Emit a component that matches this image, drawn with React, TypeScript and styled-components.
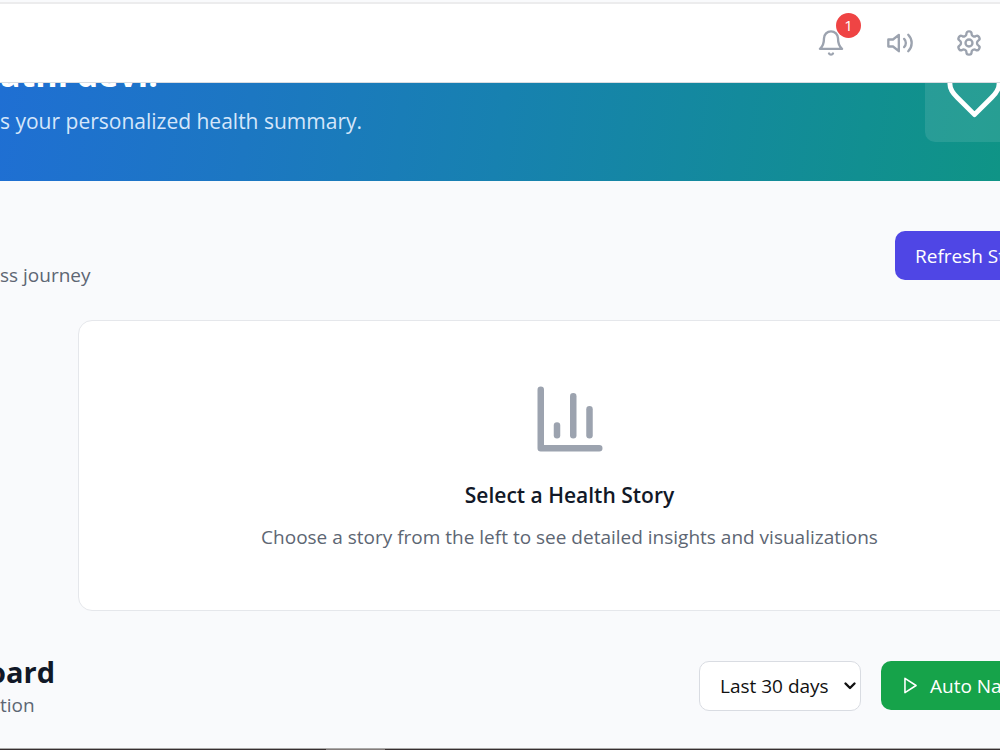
import React from "react";
import styled, { createGlobalStyle } from "styled-components";

const GlobalStyle = createGlobalStyle`
  *, *::before, *::after { box-sizing: border-box; }
  body {
    margin: 0;
    background: #f9fafc;
    color: #111827;
    font-family: "Open Sans", "Noto Sans", sans-serif;
    font-size: 19px;
    line-height: 28px;
  }
  h1, h2, h3, p { margin: 0; }
  button, select { font: inherit; }
  svg { flex: none; }
`;

const Page = styled.div`
  min-height: 100vh;
  display: flex;
  flex-direction: column;
  overflow: hidden;
`;

const Header = styled.header`
  display: flex;
  justify-content: flex-end;
  align-items: center;
  gap: 41px;
  height: 81px;
  margin-top: 2px;
  padding-right: 17px;
  background: #fff;
  border-top: 2px solid #ececed;
  border-bottom: 1px solid #d9dce1;
`;

const IconButton = styled.button`
  position: relative;
  display: flex;
  padding: 0;
  border: 0;
  background: none;
  color: #9ca3af;
`;

const Badge = styled.span`
  position: absolute;
  top: -16px;
  right: -16px;
  width: 25px;
  height: 25px;
  border-radius: 50%;
  background: #ef4444;
  color: #fff;
  font-size: 15px;
  line-height: 25px;
  text-align: center;
`;

const Banner = styled.section`
  display: flex;
  justify-content: space-between;
  align-items: flex-end;
  height: 98px;
  padding-bottom: 39px;
  overflow: hidden;
  background: linear-gradient(98deg, #1f6fd3 0%, #1c77c2 25%, #1781b0 50%, #118f91 86%, #0f9486 100%);
`;

const BannerTitle = styled.h1`
  font-size: 34px;
  line-height: 40px;
  font-weight: 700;
  color: #fff;
  white-space: nowrap;
`;

const BannerText = styled.p`
  padding: 13px 0 7px;
  font-size: 21px;
  color: #d5e6fa;
  white-space: nowrap;
`;

const HeartTile = styled.div`
  display: flex;
  flex: none;
  width: 75px;
  height: 98px;
  padding: 19px 0 0 20px;
  border-radius: 10px 0 0 10px;
  background: rgba(255, 255, 255, 0.1);
  color: #fff;
`;

const Row = styled.div<{ $top: number; $bottom: number }>`
  display: flex;
  justify-content: space-between;
  align-items: center;
  padding-top: ${(p) => p.$top}px;
  padding-bottom: ${(p) => p.$bottom}px;
`;

const TextBlock = styled.div`
  display: flex;
  flex-direction: column;
  justify-content: flex-end;
  gap: 1px;
  min-height: 69px;
  padding-bottom: 1px;
`;

const Muted = styled.p`
  color: #5d6673;
  white-space: nowrap;
`;

const ActionButton = styled.button<{ $tone: string; $width: number }>`
  display: flex;
  align-items: center;
  justify-content: flex-start;
  gap: 10px;
  width: ${(p) => p.$width}px;
  height: 49px;
  padding: 0 0 0 20px;
  border: 0;
  border-radius: 10px 0 0 10px;
  background: ${(p) => p.$tone};
  color: #fff;
  white-space: nowrap;
  overflow: hidden;
`;

const StoryCard = styled.section`
  display: flex;
  flex-direction: column;
  align-items: center;
  margin: 0 -61px 0 78px;
  padding: 59px 0;
  border: 1px solid #e5e7eb;
  border-radius: 14px;
  background: #fff;
  color: #9ca3af;
`;

const CardTitle = styled.h2`
  padding: 22px 0 13px;
  color: #111827;
  font-size: 21px;
  line-height: 30px;
  font-weight: 600;
`;

const SectionTitle = styled.h2`
  margin-left: -12px;
  font-size: 29px;
  line-height: 36px;
  font-weight: 700;
`;

const Controls = styled.div`
  display: flex;
  align-items: center;
  gap: 20px;
`;

const SelectWrap = styled.div`
  position: relative;
  color: #111;

  svg {
    position: absolute;
    top: 18px;
    right: 4px;
    pointer-events: none;
  }
`;

const RangeSelect = styled.select`
  display: block;
  appearance: none;
  width: 162px;
  height: 50px;
  padding: 0 0 0 20px;
  border: 1px solid #d9dce2;
  border-radius: 10px;
  background: #fff;
  color: inherit;
`;

const BottomBar = styled.footer`
  height: 2px;
  margin-top: auto;
  border-top: 1px solid #aaa9a8;
  background: linear-gradient(90deg, #372f30 0 326px, #847d7c 326px 385px, #372f30 385px);
`;

const stroke = {
  fill: "none",
  stroke: "currentColor",
  strokeLinecap: "round" as const,
  strokeLinejoin: "round" as const,
  "aria-hidden": true,
};

export default function App() {
  return (
    <Page>
      <GlobalStyle />
      <Header>
        <IconButton aria-label="Notifications">
          <svg width="28" height="28" viewBox="0 0 24 24" strokeWidth="2" {...stroke}>
            <path d="M2.5 17h19c-2-1.5-3.500-4-3.500-9a6 6 0 0 0-12 0c0 5-1.500 7.500-3.500 9Z" />
            <path d="M10.3 21a1.94 1.94 0 0 0 3.4 0" />
          </svg>
          <Badge>1</Badge>
        </IconButton>
        <IconButton aria-label="Sound">
          <svg width="28" height="28" viewBox="0 0 24 24" strokeWidth="2" {...stroke}>
            <polygon points="11 5 6 9 2 9 2 15 6 15 11 19 11 5" />
            <path d="M15.54 8.46a5 5 0 0 1 0 7.07" />
            <path d="M19.07 4.93a10 10 0 0 1 0 14.14" />
          </svg>
        </IconButton>
        <IconButton aria-label="Settings">
          <svg width="28" height="28" viewBox="0 0 24 24" strokeWidth="2" {...stroke}>
            <path d="M12.22 2h-.44a2 2 0 0 0-2 2v.18a2 2 0 0 1-1 1.73l-.43.25a2 2 0 0 1-2 0l-.15-.08a2 2 0 0 0-2.73.73l-.22.38a2 2 0 0 0 .73 2.73l.15.1a2 2 0 0 1 1 1.72v.51a2 2 0 0 1-1 1.74l-.15.09a2 2 0 0 0-.73 2.73l.22.38a2 2 0 0 0 2.73.73l.15-.08a2 2 0 0 1 2 0l.43.25a2 2 0 0 1 1 1.73V20a2 2 0 0 0 2 2h.44a2 2 0 0 0 2-2v-.18a2 2 0 0 1 1-1.73l.43-.25a2 2 0 0 1 2 0l.15.08a2 2 0 0 0 2.73-.73l.22-.39a2 2 0 0 0-.73-2.73l-.15-.08a2 2 0 0 1-1-1.74v-.5a2 2 0 0 1 1-1.74l.15-.09a2 2 0 0 0 .73-2.73l-.22-.38a2 2 0 0 0-2.73-.73l-.15.08a2 2 0 0 1-2 0l-.43-.25a2 2 0 0 1-1-1.73V4a2 2 0 0 0-2-2z" />
            <circle cx="12" cy="12" r="3" />
          </svg>
        </IconButton>
      </Header>

      <Banner>
        <div>
          <BannerTitle>athi devi!</BannerTitle>
          <BannerText>s your personalized health summary.</BannerText>
        </div>
        <HeartTile>
          <svg width="59" height="59" viewBox="0 0 24 24" strokeWidth="2" {...stroke}>
            <path d="M19 14c1.49-1.46 3-3.21 3-5.5A5.5 5.5 0 0 0 16.5 3c-1.76 0-3 .5-4.5 2-1.5-1.5-2.74-2-4.5-2A5.5 5.5 0 0 0 2 8.5c0 2.3 1.5 4.05 3 5.5l7 7Z" />
          </svg>
        </HeartTile>
      </Banner>

      <main>
        <Row $top={40} $bottom={30}>
          <TextBlock>
            <Muted>ss journey</Muted>
          </TextBlock>
          <ActionButton $tone="#4f46e5" $width={105}>Refresh Stories</ActionButton>
        </Row>

        <StoryCard>
          <svg width="78" height="78" viewBox="0 0 24 24" strokeWidth="2" {...stroke}>
            <path d="M3 3v18h18" />
            <path d="M18 17V9" />
            <path d="M13 17V5" />
            <path d="M8 17v-3" />
          </svg>
          <CardTitle>Select a Health Story</CardTitle>
          <Muted>Choose a story from the left to see detailed insights and visualizations</Muted>
        </StoryCard>

        <Row $top={40} $bottom={28}>
          <TextBlock>
            <SectionTitle>oard</SectionTitle>
            <Muted>tion</Muted>
          </TextBlock>
          <Controls>
            <SelectWrap>
              <RangeSelect aria-label="Date range" defaultValue="30">
                <option value="7">Last 7 days</option>
                <option value="30">Last 30 days</option>
                <option value="90">Last 90 days</option>
              </RangeSelect>
              <svg width="14" height="14" viewBox="0 0 14 14" strokeWidth="2.4" {...stroke}>
                <path d="M2.5 4.5 7 9l4.5-4.5" />
              </svg>
            </SelectWrap>
            <ActionButton $tone="#16a34a" $width={119}>
              <svg width="19" height="19" viewBox="0 0 24 24" strokeWidth="2" {...stroke}>
                <polygon points="5 3 19 12 5 21 5 3" />
              </svg>
              Auto Narrate
            </ActionButton>
          </Controls>
        </Row>
      </main>
      <BottomBar />
    </Page>
  );
}
